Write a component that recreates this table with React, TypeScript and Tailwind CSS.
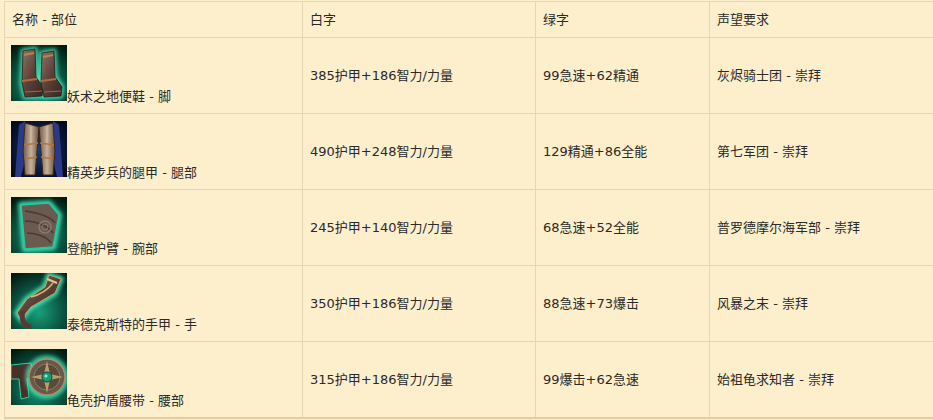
import React from "react";

const font = { fontFamily: '"DejaVu Sans", "Noto Sans CJK SC", sans-serif' };

function Glow({ id }: { id: string }) {
  return (
    <defs>
      <radialGradient id={id} cx="50%" cy="70%" r="80%">
        <stop offset="0%" stopColor="#18a07a" />
        <stop offset="50%" stopColor="#0b5a45" />
        <stop offset="100%" stopColor="#03180f" />
      </radialGradient>
      <linearGradient id={id + "m"} x1="0" y1="0" x2="1" y2="1">
        <stop offset="0%" stopColor="#8a7a6a" />
        <stop offset="50%" stopColor="#5a4038" />
        <stop offset="100%" stopColor="#3a2420" />
      </linearGradient>
      <filter id={id + "g"} x="-30%" y="-30%" width="160%" height="160%">
        <feGaussianBlur stdDeviation="2" />
      </filter>
    </defs>
  );
}

function Boots() {
  const a = "M12 6 L24 4 L25 32 L32 42 L31 51 L14 52 L11 38 Z";
  const b = "M31 8 L43 6 L44 32 L51 42 L50 51 L33 52 L30 38 Z";
  return (
    <svg width="56" height="56" viewBox="0 0 56 56" className="inline-block align-baseline">
      <Glow id="bt" />
      <rect width="56" height="56" fill="url(#bt)" />
      <g filter="url(#btg)" stroke="#46f0c0" strokeWidth="4" fill="none">
        <path d={a} />
        <path d={b} />
      </g>
      <path d={a} fill="url(#btm)" stroke="#2a1a16" strokeWidth="0.8" />
      <path d={b} fill="url(#btm)" stroke="#2a1a16" strokeWidth="0.8" />
      <path d="M11 36 L26 34 M30 36 L45 34" stroke="#b06a40" strokeWidth="2" />
      <path d="M13 10 L23 8 M32 12 L42 10" stroke="#c08050" strokeWidth="1.8" />
      <path d="M14 47 L31 46 M33 47 L50 46" stroke="#9a6a50" strokeWidth="1" />
      <path d="M16 16 L18 30 M35 18 L37 30" stroke="#9a3a30" strokeWidth="1" opacity="0.7" />
    </svg>
  );
}

function Legs() {
  return (
    <svg width="56" height="56" viewBox="0 0 56 56" className="inline-block align-baseline">
      <defs>
        <radialGradient id="lg" cx="50%" cy="50%" r="70%">
          <stop offset="0%" stopColor="#1a3a7a" />
          <stop offset="60%" stopColor="#0a1838" />
          <stop offset="100%" stopColor="#02060f" />
        </radialGradient>
        <linearGradient id="lgm" x1="0" y1="0" x2="1" y2="0">
          <stop offset="0%" stopColor="#6a5848" />
          <stop offset="50%" stopColor="#c8b098" />
          <stop offset="100%" stopColor="#6a5040" />
        </linearGradient>
      </defs>
      <rect width="56" height="56" fill="url(#lg)" />
      <path d="M8 4 L14 0 L16 30 L10 56 L4 56 Z" fill="#2a3a8a" />
      <path d="M48 4 L42 0 L40 30 L46 56 L52 56 Z" fill="#2a3a8a" />
      <path d="M14 2 L28 6 L26 30 L24 54 L14 54 L12 30 Z" fill="url(#lgm)" stroke="#3a2818" strokeWidth="1" />
      <path d="M42 2 L28 6 L30 30 L32 54 L42 54 L44 30 Z" fill="url(#lgm)" stroke="#3a2818" strokeWidth="1" />
      <path d="M13 24 L27 22 M29 22 L43 24 M14 38 L26 36 M30 36 L42 38" stroke="#b07838" strokeWidth="1.5" />
      <path d="M20 6 L20 22 M36 6 L36 22" stroke="#e0c8a8" strokeWidth="1" opacity="0.6" />
    </svg>
  );
}

function Bracer() {
  return (
    <svg width="56" height="56" viewBox="0 0 56 56" className="inline-block align-baseline">
      <Glow id="br" />
      <rect width="56" height="56" fill="url(#br)" />
      <path d="M10 8 L38 6 L48 18 L42 50 L14 52 Z" fill="none" stroke="#46f0c0" strokeWidth="5" filter="url(#brg)" />
      <path d="M10 8 L38 6 L48 18 L42 50 L14 52 Z" fill="#6a5a50" stroke="#25c89a" strokeWidth="1.5" />
      <path d="M14 14 C28 16 40 20 44 26" stroke="#4a3a34" strokeWidth="1.5" fill="none" />
      <path d="M14 24 C26 24 38 30 42 36" stroke="#4a3a34" strokeWidth="1.5" fill="none" />
      <path d="M16 36 C26 36 36 40 40 46" stroke="#4a3a34" strokeWidth="1.5" fill="none" />
      <circle cx="34" cy="30" r="6" fill="none" stroke="#8a7a6e" strokeWidth="1.5" />
      <circle cx="34" cy="30" r="3" fill="none" stroke="#8a7a6e" strokeWidth="1" />
    </svg>
  );
}

function Gloves() {
  return (
    <svg width="56" height="56" viewBox="0 0 56 56" className="inline-block align-baseline">
      <Glow id="gl" />
      <rect width="56" height="56" fill="url(#gl)" />
      <path d="M38 2 L50 6 L44 20 L20 34 L10 46 L6 40 L16 26 L34 14 Z" fill="none" stroke="#46f0c0" strokeWidth="5" filter="url(#glg)" />
      <path d="M38 2 L50 6 L44 20 L20 34 L10 46 L6 40 L16 26 L34 14 Z" fill="url(#glm)" stroke="#c0a060" strokeWidth="1" />
      <path d="M12 38 C10 46 12 52 20 54" stroke="#5a3a30" strokeWidth="5" fill="none" />
      <path d="M20 24 C28 22 36 18 42 10" stroke="#d8b870" strokeWidth="1.5" fill="none" />
      <path d="M36 6 L46 10" stroke="#e0c890" strokeWidth="2" />
    </svg>
  );
}

function Belt() {
  return (
    <svg width="56" height="56" viewBox="0 0 56 56" className="inline-block align-baseline">
      <Glow id="bl" />
      <rect width="56" height="56" fill="url(#bl)" />
      <path d="M0 16 L20 14 L22 26 L16 30 L18 48 L10 50 L8 30 L0 30 Z" fill="#4a3028" stroke="#2ad0a0" strokeWidth="1" />
      <circle cx="36" cy="28" r="19" fill="none" stroke="#46f0c0" strokeWidth="4" filter="url(#blg)" />
      <circle cx="36" cy="28" r="18" fill="#6a5848" stroke="#a89070" strokeWidth="1.5" />
      <circle cx="36" cy="28" r="13" fill="#5a4a3c" stroke="#8a7a60" strokeWidth="1" />
      <path d="M36 12 L39 25 L52 28 L39 31 L36 44 L33 31 L20 28 L33 25 Z" fill="#c8b070" opacity="0.85" />
      <circle cx="36" cy="28" r="5" fill="#1a9a78" stroke="#0a4a3a" strokeWidth="1" />
      <circle cx="35" cy="27" r="1.6" fill="#8af0d0" />
    </svg>
  );
}

const rows = [
  { icon: <Boots />, name: "妖术之地便鞋 - 脚", white: "385护甲+186智力/力量", green: "99急速+62精通", rep: "灰烬骑士团 - 崇拜" },
  { icon: <Legs />, name: "精英步兵的腿甲 - 腿部", white: "490护甲+248智力/力量", green: "129精通+86全能", rep: "第七军团 - 崇拜" },
  { icon: <Bracer />, name: "登船护臂 - 腕部", white: "245护甲+140智力/力量", green: "68急速+52全能", rep: "普罗德摩尔海军部 - 崇拜" },
  { icon: <Gloves />, name: "泰德克斯特的手甲 - 手", white: "350护甲+186智力/力量", green: "88急速+73爆击", rep: "风暴之末 - 崇拜" },
  { icon: <Belt />, name: "龟壳护盾腰带 - 腰部", white: "315护甲+186智力/力量", green: "99爆击+62急速", rep: "始祖龟求知者 - 崇拜" },
];

export default function App() {
  return (
    <div className="w-[933px] h-[420px] overflow-hidden bg-[#fdefcc] pt-px pl-[4px] text-[13px] text-[#2a2a2a]" style={font}>
      <table className="border-collapse table-fixed w-[1000px] border-b-2 border-b-[#e2cca4]">
        <colgroup>
          <col className="w-[298px]" />
          <col className="w-[233px]" />
          <col className="w-[174px]" />
          <col className="w-[295px]" />
        </colgroup>
        <thead>
          <tr className="h-[36px]">
            <th className="border border-[#e8d5b2] px-[7px] text-left font-normal align-middle">名称 - 部位</th>
            <th className="border border-[#e8d5b2] px-[7px] text-left font-normal align-middle">白字</th>
            <th className="border border-[#e8d5b2] px-[7px] text-left font-normal align-middle">绿字</th>
            <th className="border border-[#e8d5b2] px-[7px] text-left font-normal align-middle">声望要求</th>
          </tr>
        </thead>
        <tbody>
          {rows.map((r, i) => (
            <tr key={i} className="h-[76px]">
              <td className="border border-[#e8d5b2] pl-[6px] pr-[7px] align-middle leading-[18px]">
                {r.icon}
                <span>{r.name}</span>
              </td>
              <td className="border border-[#e8d5b2] px-[7px] align-middle">{r.white}</td>
              <td className="border border-[#e8d5b2] px-[7px] align-middle">{r.green}</td>
              <td className="border border-[#e8d5b2] px-[7px] align-middle">{r.rep}</td>
            </tr>
          ))}
        </tbody>
      </table>
    </div>
  );
}
